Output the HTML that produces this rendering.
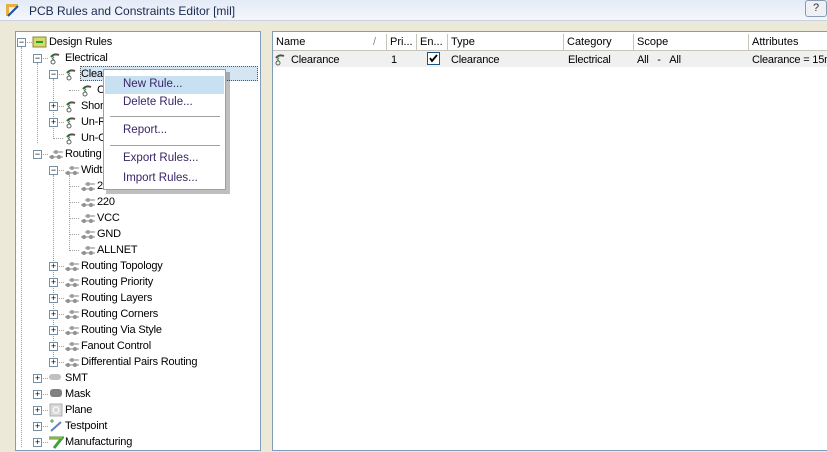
<!DOCTYPE html><html><head><style>
*{margin:0;padding:0;box-sizing:border-box}
body{width:827px;height:449px;overflow:hidden;background:#ece9d8;font-family:"Liberation Sans",Arial,sans-serif;font-size:11px;color:#000;position:relative}
.a{position:absolute;white-space:nowrap}
.t{position:absolute;white-space:nowrap;line-height:14px;letter-spacing:-0.2px}
.e{position:absolute;width:9px;height:9px;border:1px solid #7a8ea8;background:#fff;font-size:9px;line-height:7px;text-align:center;color:#000}
.dv{position:absolute;border-left:1px dotted #a0a0a0}
.dh{position:absolute;border-top:1px dotted #a0a0a0}
.m{position:absolute;left:123px;color:#3a2468;font-size:11.5px}
.h{position:absolute;top:34px;height:17px;line-height:17px;border-left:1px solid #c8c5b8;padding-left:3px}
</style></head><body>
<div class="a" style="left:0;top:0;width:827px;height:20px;background:linear-gradient(#e4ebf7,#f4f6fb)"></div>
<div class="a" style="left:0;top:20px;width:827px;height:1px;background:#c9d2e2"></div>
<svg class="a" style="left:4px;top:2px" width="16" height="16"><path d="M2 2h12v3H5v9H2z" fill="#e8b040"/><path d="M4 14L14 4" stroke="#2050a0" stroke-width="2"/></svg>
<div class="a" style="left:29px;top:4px;font-size:12px;color:#1a2a50">PCB Rules and Constraints Editor [mil]</div>
<div class="a" style="left:805px;top:0;width:22px;height:17px;border:1px solid #8a9ab0;border-radius:3px;background:#eef0f4;font-size:11px;text-align:center;line-height:15px;color:#333">?</div>
<div class="a" style="left:15px;top:31px;width:246px;height:420px;background:#fff;border:1px solid #7f9db9"></div>
<div class="a" style="left:272px;top:31px;width:560px;height:420px;background:#fff;border:1px solid #7f9db9"></div>
<div class="dv" style="left:21px;top:47px;height:400px"></div>
<div class="dv" style="left:37px;top:63px;height:80px"></div>
<div class="dv" style="left:53px;top:79px;height:60px"></div>
<div class="dv" style="left:53px;top:175px;height:190px"></div>
<div class="dv" style="left:69px;top:175px;height:76px"></div>
<div id="tree"></div>
<script>
var W='<svg width="14" height="14"><path d="M3 6Q6 2 11 4" stroke="#505050" stroke-width="2" fill="none"/><circle cx="5" cy="11" r="2" fill="none" stroke="#606060"/><path d="M4 5l2 2M4 7l2 2" stroke="#3a8a3a"/></svg>';
var R='<svg width="16" height="14"><path d="M1 10h14M5 5h10" stroke="#808080"/><circle cx="4" cy="10" r="2" fill="#909090"/><circle cx="11" cy="10" r="2" fill="#909090"/><circle cx="8" cy="5" r="2" fill="#a0a0a0"/></svg>';
var D='<svg width="15" height="13"><rect x="1" y="2" width="13" height="10" fill="#d8d870" stroke="#888830"/><path d="M4 7h7" stroke="#20a020" stroke-width="2"/></svg>';
var S='<svg width="16" height="12"><rect x="1" y="3" width="12" height="6" rx="3" fill="#c0c0c0"/></svg>';
var M='<svg width="16" height="12"><rect x="2" y="2" width="12" height="8" rx="3" fill="#808080"/></svg>';
var P='<svg width="16" height="14"><rect x="2" y="1" width="12" height="12" fill="#d8d8d8" stroke="#b0b0b0"/><circle cx="8" cy="7" r="3" fill="none" stroke="#fff"/></svg>';
var T='<svg width="16" height="14"><path d="M3 12L13 3" stroke="#6080c0" stroke-width="2"/><path d="M2 2h4M4 0v4" stroke="#40a040"/></svg>';
var F='<svg width="16" height="14"><path d="M1 3h13L6 13" stroke="#40a040" stroke-width="3" fill="none"/><path d="M1 3h13" stroke="#e0c040"/></svg>';
var rows=[[21,41,'-',D,'Design Rules'],[37,57,'-',W,'Electrical'],[53,73,'-',W,'Clearance'],[69,89,'',W,'Clearance'],[53,105,'+',W,'Short-Circuit'],[53,121,'+',W,'Un-Routed Net'],[53,137,'',W,'Un-Connected Pin'],[37,153,'-',R,'Routing'],[53,169,'-',R,'Width'],[69,185,'',R,'250'],[69,201,'',R,'220'],[69,217,'',R,'VCC'],[69,233,'',R,'GND'],[69,249,'',R,'ALLNET'],[53,265,'+',R,'Routing Topology'],[53,281,'+',R,'Routing Priority'],[53,297,'+',R,'Routing Layers'],[53,313,'+',R,'Routing Corners'],[53,329,'+',R,'Routing Via Style'],[53,345,'+',R,'Fanout Control'],[53,361,'+',R,'Differential Pairs Routing'],[37,377,'+',S,'SMT'],[37,393,'+',M,'Mask'],[37,409,'+',P,'Plane'],[37,425,'+',T,'Testpoint'],[37,441,'+',F,'Manufacturing']];
var h='';
rows.forEach(function(r){var x=r[0],y=r[1]+1;
if(r[2])h+='<div class="e" style="left:'+(x-4)+'px;top:'+(y-4)+'px">'+(r[2]=='-'?'&#8722;':'+')+'</div>';
else h+='<div class="dh" style="left:'+x+'px;top:'+y+'px;width:10px"></div>';
if(r[2])h+='<div class="dh" style="left:'+(x+6)+'px;top:'+y+'px;width:5px"></div>';
h+='<div class="a" style="left:'+(x+11)+'px;top:'+(y-7)+'px">'+r[3]+'</div>';
if(x==53&&r[1]==73)h+='<div class="a" style="left:80px;top:66px;width:178px;height:15px;background:#d5e5f2;border:1px dotted #555"></div>';
h+='<div class="t" style="left:'+(x+28)+'px;top:'+(y-7)+'px">'+r[4]+'</div>';});
document.getElementById('tree').innerHTML=h;
</script>
<div class="a" style="left:106px;top:72px;width:124px;height:122px;background:rgba(0,0,0,0.25)"></div>
<div class="a" style="left:103px;top:69px;width:123px;height:121px;background:#fff;border:1px solid #a0a0a0"></div>
<div class="a" style="left:105px;top:76px;width:119px;height:18px;background:#c7e1f2"></div>
<div class="m" style="top:78px">New Rule...</div>
<div class="m" style="top:96px">Delete Rule...</div>
<div class="a" style="left:110px;top:116px;width:110px;height:1px;background:#a0a0a0"></div>
<div class="m" style="top:124px">Report...</div>
<div class="a" style="left:110px;top:145px;width:110px;height:1px;background:#a0a0a0"></div>
<div class="m" style="top:152px">Export Rules...</div>
<div class="m" style="top:172px">Import Rules...</div>
<div class="a" style="left:273px;top:32px;width:554px;height:19px;background:#fff;border-bottom:1px solid #c8c5b8"></div>
<div class="h" style="left:273px;border-left:none">Name</div>
<div class="a" style="left:373px;top:36px;color:#888">/</div>
<div class="h" style="left:386px">Pri...</div>
<div class="h" style="left:416px">En...</div>
<div class="h" style="left:447px">Type</div>
<div class="h" style="left:563px">Category</div>
<div class="h" style="left:633px">Scope</div>
<div class="h" style="left:748px">Attributes</div>
<div class="a" style="left:273px;top:51px;width:554px;height:16px;background:#f0f0f0"></div>
<svg class="a" style="left:273px;top:52px" width="14" height="14"><path d="M3 6Q6 2 11 4" stroke="#505050" stroke-width="2" fill="none"/><circle cx="5" cy="11" r="2" fill="none" stroke="#606060"/><path d="M4 5l2 2M4 7l2 2" stroke="#3a8a3a"/></svg>
<div class="t" style="left:291px;top:53px">Clearance</div>
<div class="t" style="left:391px;top:53px">1</div>
<div class="a" style="left:427px;top:52px;width:13px;height:13px;border:1px solid #1c5180;background:#fff"><svg width="11" height="11"><path d="M2 5l2 3 5-6" stroke="#000" stroke-width="1.8" fill="none"/></svg></div>
<div class="t" style="left:451px;top:53px">Clearance</div>
<div class="t" style="left:568px;top:53px">Electrical</div>
<div class="t" style="left:637px;top:53px">All &nbsp;&nbsp;- &nbsp;&nbsp;All</div>
<div class="t" style="left:752px;top:53px">Clearance = 15mil</div>
</body></html>
